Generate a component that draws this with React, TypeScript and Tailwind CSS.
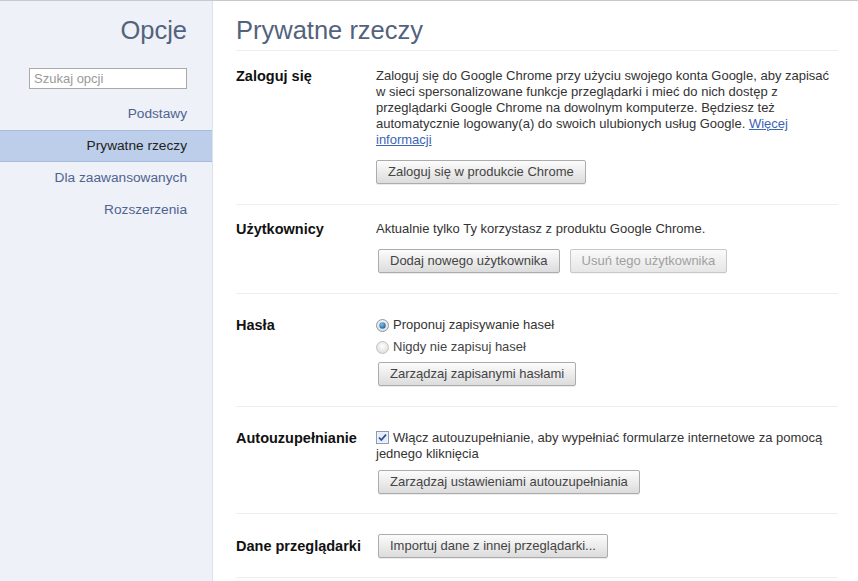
import React from "react";

const font = { fontFamily: '"Liberation Sans", Arial, sans-serif' };

function Btn({ children, disabled }: { children: React.ReactNode; disabled?: boolean }) {
  return (
    <button
      className={
        disabled
          ? "h-[24px] px-[11px] rounded-[2px] border border-[#c8c8c8] bg-gradient-to-b from-[#fafafa] to-[#e6e6e6] text-[13px] text-[#a0a0a0] leading-[22px] shadow-[0_1px_0_rgba(0,0,0,0.04)]"
          : "h-[24px] px-[11px] rounded-[2px] border border-[#acacac] bg-gradient-to-b from-[#fcfcfc] to-[#dcdcdc] text-[13px] text-[#444] leading-[22px] shadow-[0_1px_0_rgba(0,0,0,0.08)]"
      }
    >
      {children}
    </button>
  );
}

function Radio({ checked }: { checked?: boolean }) {
  return (
    <svg width="13" height="13" viewBox="0 0 13 13" className="shrink-0">
      <defs>
        <radialGradient id={checked ? "rg1" : "rg0"} cx="50%" cy="40%" r="60%">
          <stop offset="0%" stopColor="#ffffff" />
          <stop offset="100%" stopColor="#dcdcdc" />
        </radialGradient>
        <radialGradient id="dot" cx="40%" cy="35%" r="70%">
          <stop offset="0%" stopColor="#7fc3ea" />
          <stop offset="100%" stopColor="#1b5d9c" />
        </radialGradient>
      </defs>
      <circle cx="6.5" cy="6.5" r="6" fill={`url(#${checked ? "rg1" : "rg0"})`} stroke={checked ? "#8f9aa6" : "#c2c2c2"} />
      {checked && <circle cx="6.5" cy="6.5" r="3.2" fill="url(#dot)" />}
    </svg>
  );
}

function Checkbox() {
  return (
    <svg width="13" height="13" viewBox="0 0 13 13" className="shrink-0">
      <rect x="0.5" y="0.5" width="12" height="12" fill="#f4f7fb" stroke="#8e9cb3" />
      <rect x="1.5" y="1.5" width="10" height="10" fill="#e6edf7" />
      <path d="M3 6.5 L5.3 9 L10 3.6" stroke="#2a4c9a" strokeWidth="1.7" fill="none" />
    </svg>
  );
}

function Section({ label, children, className }: { label: string; children: React.ReactNode; className?: string }) {
  return (
    <div className={"flex border-b border-[#eeeeee] " + (className || "")}>
      <div className="w-[140px] shrink-0 font-bold text-[14.5px] text-[#111] leading-[16px]">{label}</div>
      <div className="flex-1 text-[13px] text-[#333] leading-[16px]">{children}</div>
    </div>
  );
}

export default function App() {
  return (
    <div style={font} className="w-[858px] h-[581px] flex border-t border-[#c9c9c9] bg-white overflow-hidden">
      {/* Sidebar */}
      <div className="w-[213px] shrink-0 h-full bg-[#eef1f7] border-r border-[#dde1e8] flex flex-col">
        <div className="pr-[25px] pt-[13px] text-right text-[25.5px] leading-[32px] text-[#53637d]">Opcje</div>
        <div className="pr-[25px] pl-[29px] mt-[22px]">
          <div className="h-[21px] border border-[#a9a9a9] bg-white px-[4px] text-[13px] leading-[19px] text-[#9a9a9a]">Szukaj opcji</div>
        </div>
        <div className="mt-[9px] flex flex-col text-[13.7px]">
          <div className="h-[32px] flex items-center justify-end pr-[25px] text-[#4e6391]">Podstawy</div>
          <div className="h-[32px] flex items-center justify-end pr-[25px] bg-[#bccee9] border-y border-[#a8bcdc] text-[#222]">Prywatne rzeczy</div>
          <div className="h-[32px] flex items-center justify-end pr-[25px] text-[#4e6391]">Dla zaawansowanych</div>
          <div className="h-[32px] flex items-center justify-end pr-[25px] text-[#4e6391]">Rozszerzenia</div>
        </div>
      </div>

      {/* Main */}
      <div className="flex-1 pl-[23px] pr-[20px]">
        <div className="pt-[13px] pb-[4px] border-b border-[#eeeeee] text-[25.5px] leading-[32px] text-[#53637d]">Prywatne rzeczy</div>

        <Section label="Zaloguj się" className="pt-[17px] pb-[20px]">
          <p>
            Zaloguj się do Google Chrome przy użyciu swojego konta Google, aby zapisać
            <br />w sieci spersonalizowane funkcje przeglądarki i mieć do nich dostęp z
            <br />przeglądarki Google Chrome na dowolnym komputerze. Będziesz też
            <br />automatycznie logowany(a) do swoich ulubionych usług Google.{" "}
            <a className="text-[#3c64b4] underline">
              Więcej
              <br />informacji
            </a>
          </p>
          <div className="mt-[12px]">
            <Btn>Zaloguj się w produkcie Chrome</Btn>
          </div>
        </Section>

        <Section label="Użytkownicy" className="pt-[16px] pb-[20px]">
          <p>Aktualnie tylko Ty korzystasz z produktu Google Chrome.</p>
          <div className="mt-[12px] flex gap-[10px] pl-[2px]">
            <Btn>Dodaj nowego użytkownika</Btn>
            <Btn disabled>Usuń tego użytkownika</Btn>
          </div>
        </Section>

        <Section label="Hasła" className="pt-[23px] pb-[20px]">
          <div className="flex items-center gap-[4px] h-[16px]">
            <Radio checked />
            <span>Proponuj zapisywanie haseł</span>
          </div>
          <div className="flex items-center gap-[4px] h-[16px] mt-[6px] text-[#444]">
            <Radio />
            <span>Nigdy nie zapisuj haseł</span>
          </div>
          <div className="mt-[7px] pl-[2px]">
            <Btn>Zarządzaj zapisanymi hasłami</Btn>
          </div>
        </Section>

        <Section label="Autouzupełnianie" className="pt-[23px] pb-[19px]">
          <p>
            <span className="inline-block align-[-2px] mr-[4px]">
              <Checkbox />
            </span>
            Włącz autouzupełnianie, aby wypełniać formularze internetowe za pomocą
            <br />jednego kliknięcia
          </p>
          <div className="mt-[8px] pl-[2px]">
            <Btn>Zarządzaj ustawieniami autouzupełniania</Btn>
          </div>
        </Section>

        <Section label="Dane przeglądarki" className="pt-[20px] pb-[19px] items-center">
          <div className="pl-[2px]">
            <Btn>Importuj dane z innej przeglądarki...</Btn>
          </div>
        </Section>
      </div>
    </div>
  );
}
